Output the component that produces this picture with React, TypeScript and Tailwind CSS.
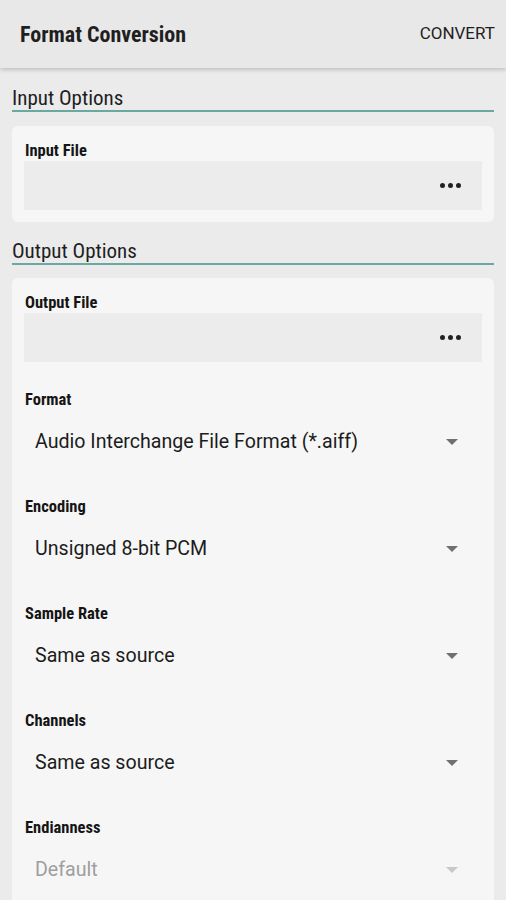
import React from "react";

const cond: React.CSSProperties = { fontFamily: "Roboto, 'Noto Sans', sans-serif", fontStretch: "condensed" };

function Dots() {
  return (
    <div className="flex items-center gap-[3px]">
      <span className="block w-[5px] h-[5px] rounded-full bg-[#222]" />
      <span className="block w-[5px] h-[5px] rounded-full bg-[#222]" />
      <span className="block w-[5px] h-[5px] rounded-full bg-[#222]" />
    </div>
  );
}

function Arrow({ disabled }: { disabled?: boolean }) {
  return (
    <svg width="12" height="6" viewBox="0 0 12 6">
      <path d="M0 0 L12 0 L6 6 Z" fill={disabled ? "#c8c8c8" : "#707070"} />
    </svg>
  );
}

function SectionTitle({ children, first }: { children: React.ReactNode; first?: boolean }) {
  return (
    <div className={"mx-[12px] border-b-2 border-[#6aa8a0] " + (first ? "mt-[18px]" : "mt-[17px]")}>
      <div className="text-[21px] leading-[24px] text-[#1e1e1e] font-normal" style={cond}>
        {children}
      </div>
    </div>
  );
}

function Label({ children }: { children: React.ReactNode }) {
  return (
    <div className="pl-[1px] text-[16.5px] leading-[20px] font-bold text-[#151515]" style={cond}>
      {children}
    </div>
  );
}

function FileBox() {
  return (
    <div className="h-[49px] bg-[#ececec] flex items-center justify-end pr-[21px]">
      <Dots />
    </div>
  );
}

function Dropdown({ value, disabled }: { value: string; disabled?: boolean }) {
  return (
    <div className="mt-[7px] h-[49px] flex items-center justify-between pl-[11px] pr-[24px]">
      <span
        className={"text-[19.6px] " + (disabled ? "text-[#9e9e9e]" : "text-[#1c1c1c]")}
        style={{ fontFamily: "Roboto, 'Noto Sans', sans-serif" }}
      >
        {value}
      </span>
      <Arrow disabled={disabled} />
    </div>
  );
}

export default function App() {
  return (
    <div className="w-[506px] h-[900px] overflow-hidden bg-[#ebebeb] relative">
      <div className="h-[68px] bg-[#e8e8e8] flex items-center justify-between pl-[20px] pr-[11px] shadow-[0_2px_4px_rgba(0,0,0,0.18)] relative z-10">
        <div className="text-[22px] font-bold text-[#1f1f1f]" style={cond}>
          Format Conversion
        </div>
        <div className="text-[17px] text-[#1f1f1f]" style={{ fontFamily: "Roboto, sans-serif" }}>
          CONVERT
        </div>
      </div>

      <SectionTitle first>Input Options</SectionTitle>
      <div className="mx-[12px] mt-[14px] bg-[#f6f6f6] rounded-[6px] px-[12px] pt-[15px] pb-[12px]">
        <Label>Input File</Label>
        <FileBox />
      </div>

      <SectionTitle>Output Options</SectionTitle>
      <div className="mx-[12px] mt-[13px] bg-[#f6f6f6] rounded-[6px] px-[12px] pt-[15px] pb-[40px]">
        <Label>Output File</Label>
        <FileBox />
        <div className="mt-[28px] flex flex-col gap-[31px]">
          <div>
            <Label>Format</Label>
            <Dropdown value="Audio Interchange File Format (*.aiff)" />
          </div>
          <div>
            <Label>Encoding</Label>
            <Dropdown value="Unsigned 8-bit PCM" />
          </div>
          <div>
            <Label>Sample Rate</Label>
            <Dropdown value="Same as source" />
          </div>
          <div>
            <Label>Channels</Label>
            <Dropdown value="Same as source" />
          </div>
          <div>
            <Label>Endianness</Label>
            <Dropdown value="Default" disabled />
          </div>
        </div>
      </div>
    </div>
  );
}
